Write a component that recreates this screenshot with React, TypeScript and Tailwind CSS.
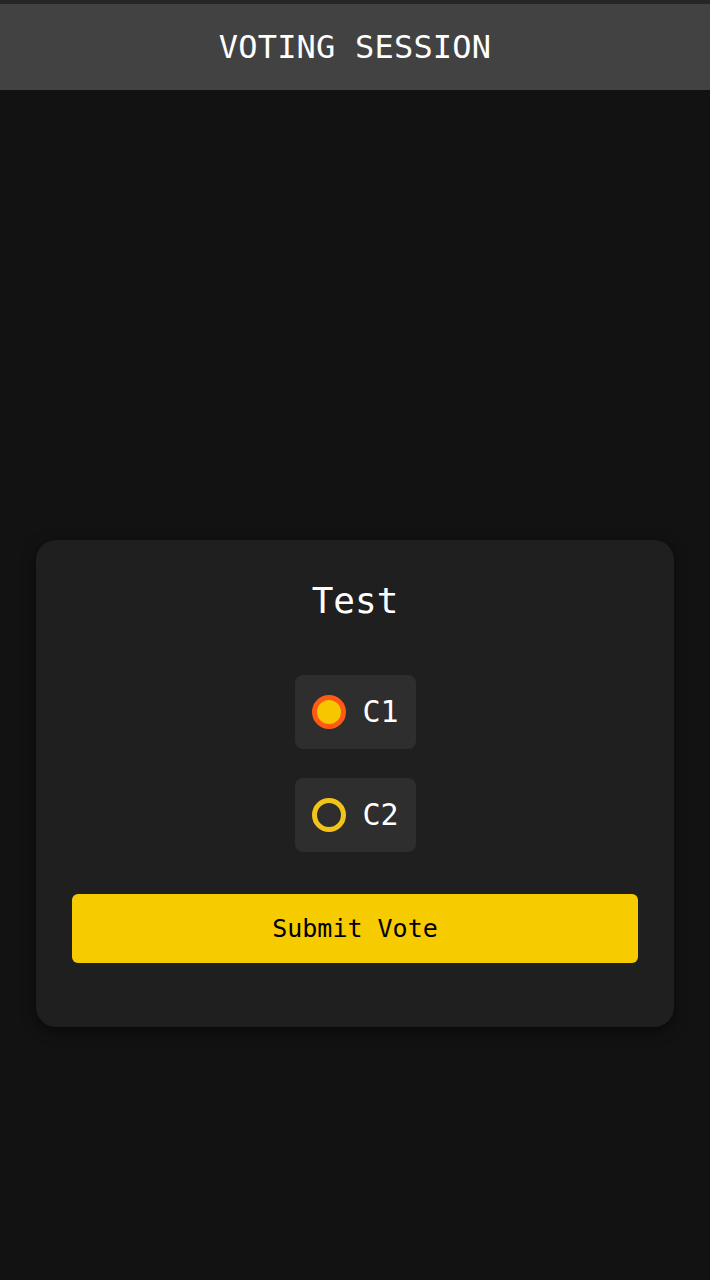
import React from "react";

const mono = { fontFamily: '"DejaVu Sans Mono", "Liberation Mono", monospace' };

export default function App() {
  return (
    <div className="min-h-[1280px] w-full bg-[#121212] flex flex-col" style={mono}>
      <div className="h-[4px] bg-[#262626]" />
      <header className="h-[86px] bg-[#424242] flex items-center justify-center">
        <h1 className="text-[32px] text-white tracking-[0.2px] leading-none font-medium">VOTING SESSION</h1>
      </header>
      <main className="px-[36px] pt-[450px]">
        <div className="bg-[#1f1f1f] rounded-[20px] shadow-[0_4px_14px_rgba(0,0,0,0.5)] px-[36px] pt-[39px] pb-[64px] flex flex-col items-center">
          <h2 className="text-[36px] text-white leading-[44px] font-medium">Test</h2>
          <div className="mt-[52px] flex flex-col items-center gap-[29px]">
            <div className="w-[121px] h-[74px] bg-[#2e2e2e] rounded-[8px] flex items-center pl-[17px] gap-[17px]">
              <span className="w-[34px] h-[34px] rounded-full border-[5px] border-[#ff5a14] bg-[#f6c700] box-border" />
              <span className="text-[30px] text-white leading-none">C1</span>
            </div>
            <div className="w-[121px] h-[74px] bg-[#2e2e2e] rounded-[8px] flex items-center pl-[17px] gap-[17px]">
              <span className="w-[34px] h-[34px] rounded-full border-[5px] border-[#f2c418] bg-transparent box-border" />
              <span className="text-[30px] text-white leading-none">C2</span>
            </div>
          </div>
          <button className="mt-[42px] w-full h-[69px] bg-[#f6cb00] rounded-[6px] text-[25px] text-black font-medium" style={mono}>
            Submit Vote
          </button>
        </div>
      </main>
    </div>
  );
}
